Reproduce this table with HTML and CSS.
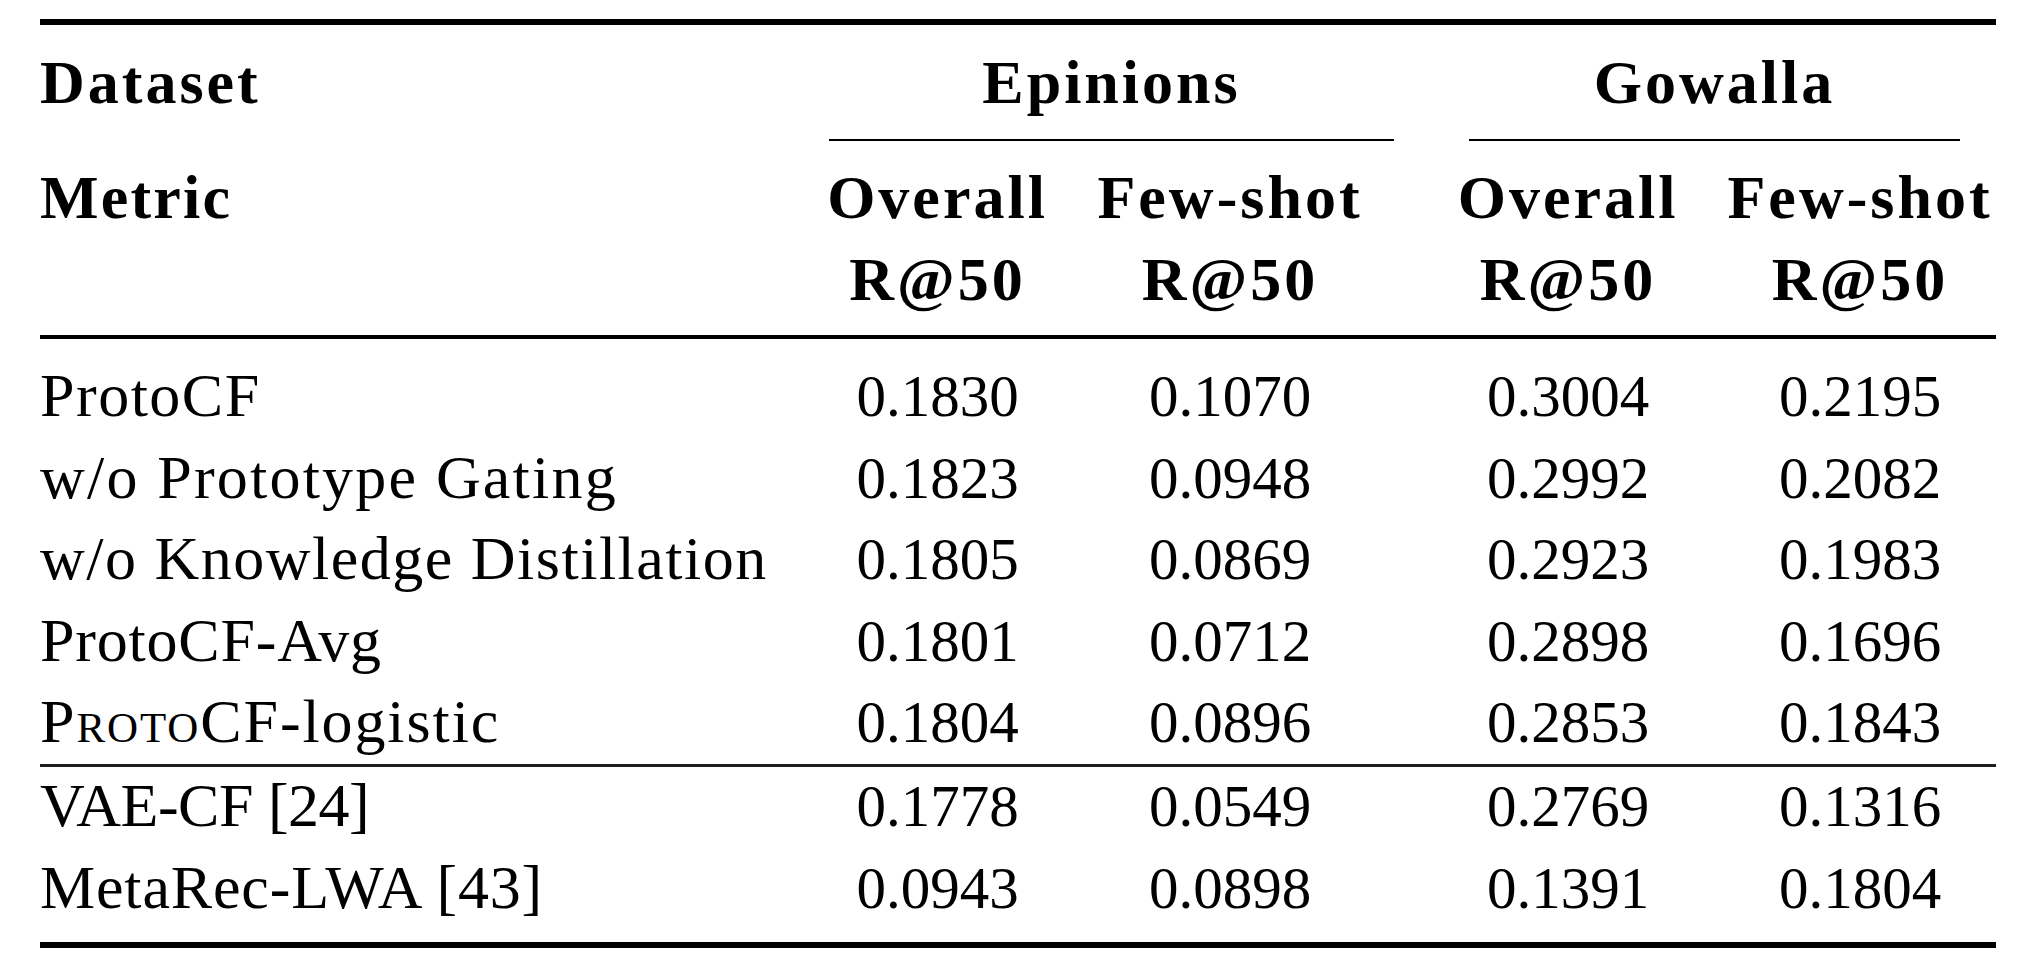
FILE: index.html
```html
<!DOCTYPE html>
<html lang="en">
<head>
<meta charset="utf-8">
<title>ProtoCF ablation results</title>
<link rel="stylesheet" href="styles.css">
</head>
<body>
<table class="results">
  <colgroup>
    <col class="c-label">
    <col class="c-e1">
    <col class="c-e2">
    <col class="c-g1">
    <col class="c-g2">
  </colgroup>
  <thead>
    <tr class="row-dataset">
      <th class="lbl-h">Dataset</th>
      <th colspan="2" class="grp-cell"><div class="grp grp-epinions">Epinions</div></th>
      <th colspan="2" class="grp-cell"><div class="grp grp-gowalla">Gowalla</div></th>
    </tr>
    <tr class="row-metric">
      <th class="lbl-h lbl-metric">Metric</th>
      <th>Overall<br>R@50</th>
      <th>Few-shot<br>R@50</th>
      <th>Overall<br>R@50</th>
      <th>Few-shot<br>R@50</th>
    </tr>
  </thead>
  <tbody>
    <tr class="first">
      <td class="lbl">ProtoCF</td>
      <td><span class="n">0.1830</span></td>
      <td><span class="n">0.1070</span></td>
      <td><span class="n">0.3004</span></td>
      <td><span class="n">0.2195</span></td>
    </tr>
    <tr>
      <td class="lbl ls-wide">w/o Prototype Gating</td>
      <td><span class="n">0.1823</span></td>
      <td><span class="n">0.0948</span></td>
      <td><span class="n">0.2992</span></td>
      <td><span class="n">0.2082</span></td>
    </tr>
    <tr>
      <td class="lbl">w/o Knowledge Distillation</td>
      <td><span class="n">0.1805</span></td>
      <td><span class="n">0.0869</span></td>
      <td><span class="n">0.2923</span></td>
      <td><span class="n">0.1983</span></td>
    </tr>
    <tr>
      <td class="lbl ls-avg">ProtoCF-Avg</td>
      <td><span class="n">0.1801</span></td>
      <td><span class="n">0.0712</span></td>
      <td><span class="n">0.2898</span></td>
      <td><span class="n">0.1696</span></td>
    </tr>
    <tr class="last-ablation">
      <td class="lbl ls-logistic"><span class="sc">Proto</span>CF-logistic</td>
      <td><span class="n">0.1804</span></td>
      <td><span class="n">0.0896</span></td>
      <td><span class="n">0.2853</span></td>
      <td><span class="n">0.1843</span></td>
    </tr>
    <tr class="baseline-first">
      <td class="lbl ls-vae">VAE-CF [24]</td>
      <td><span class="n">0.1778</span></td>
      <td><span class="n">0.0549</span></td>
      <td><span class="n">0.2769</span></td>
      <td><span class="n">0.1316</span></td>
    </tr>
    <tr class="baseline-last">
      <td class="lbl ls-meta">MetaRec-LWA [43]</td>
      <td><span class="n">0.0943</span></td>
      <td><span class="n">0.0898</span></td>
      <td><span class="n">0.1391</span></td>
      <td><span class="n">0.1804</span></td>
    </tr>
  </tbody>
</table>
</body>
</html>
```
FILE: styles.css
```css
html, body {
  margin: 0;
  padding: 0;
  background: #ffffff;
  color: #000000;
  font-family: "Liberation Serif", "Times New Roman", serif;
}

.results {
  margin: 19px 0 0 40px;
  width: 1956px;
  table-layout: fixed;
  border-collapse: separate;
  border-spacing: 0;
  font-size: 62px;
}

.c-label { width: 787px; }
.c-e1 { width: 221px; }
.c-e2 { width: 364px; }
.c-g1 { width: 312px; }
.c-g2 { width: 272px; }

th, td {
  padding: 0;
  vertical-align: top;
  white-space: nowrap;
  text-align: center;
  font-weight: 400;
}

thead th {
  font-weight: 700;
  letter-spacing: 3px;
}

thead th.lbl-metric {
  letter-spacing: 2.2px;
}

.lbl-h, .lbl {
  text-align: left;
}

/* header row 1 */
.row-dataset th {
  border-top: 6px solid #000;
  line-height: 114px;
}

.grp {
  border-bottom: 2px solid #000;
}

.grp-epinions {
  margin: 0 18px 0 2px;
}

.grp-gowalla {
  margin: 0 36px 0 57px;
}

/* header row 2 */
.row-metric th {
  padding: 15px 0;
  line-height: 82px;
  border-bottom: 4px solid #000;
}

/* body */
tbody td {
  line-height: 81.5px;
}

td.lbl {
  letter-spacing: 1.5px;
}

td.ls-wide { letter-spacing: 2.2px; }
td.ls-avg { letter-spacing: 0.8px; }
td.ls-logistic { letter-spacing: 1.9px; }
td.ls-vae { letter-spacing: -0.5px; }
td.ls-meta { letter-spacing: 0.85px; }

.sc {
  font-variant: small-caps;
}

.n {
  font-size: 59px;
  line-height: 1;
  letter-spacing: 0;
}

tr.first td {
  padding-top: 16px;
}

tr.last-ablation td {
  padding-bottom: 1.5px;
}

tr.baseline-first td {
  border-top: 3px solid #1e1e1e;
  line-height: 76px;
}

tr.baseline-last td {
  line-height: 89px;
  padding-bottom: 10px;
  border-bottom: 6px solid #000;
}
```
